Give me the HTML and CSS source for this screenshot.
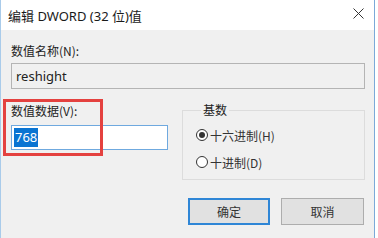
FILE: index.html
```html
<html>
	<head>
		<title> 编辑 DWORD </title>
		<link rel="stylesheet" href="styles.css">
	</head>
	<body>
		<div class="dialog">
			<div class="title-bar">
				<div class="title">编辑 DWORD (32 位)值</div>
				<div class="close-button">
					<svg width="11" height="11" viewBox="0 0 11 11">
						<path d="M0.5 0.5 L10.5 10.5 M10.5 0.5 L0.5 10.5" stroke="#333" stroke-width="1" fill="none"/>
					</svg>
				</div>
			</div>

			<div class="content">
				<div class="field-label">数值名称(N):</div>
				<div class="text-box readonly-box">reshight</div>

				<div class="middle-row">
					<div class="data-column">
						<div class="field-label data-label">数值数据(V):</div>
						<div class="text-box focus-box"><span class="selected-text">768</span></div>
						<div class="red-mark"></div>
					</div>

					<fieldset class="base-group">
						<legend class="base-legend">基数</legend>
						<div class="radio-row">
							<span class="radio radio-checked"></span>
							<span class="radio-label">十六进制(H)</span>
						</div>
						<div class="radio-row">
							<span class="radio"></span>
							<span class="radio-label">十进制(D)</span>
						</div>
					</fieldset>
				</div>

				<div class="button-row">
					<button class="dialog-button default-button">确定</button>
					<button class="dialog-button">取消</button>
				</div>
			</div>
		</div>
	</body>
</html>
```

FILE: styles.css
```css
* {
	margin: 0;
	padding: 0;
	box-sizing: border-box;
}

body {
	width: 378px;
	height: 238px;
	background: #ffffff;
	font-family: "Noto Sans", "Noto Sans CJK SC", sans-serif;
	font-size: 12px;
	color: #000;
	overflow: hidden;
}

.dialog {
	width: 375px;
	height: 238px;
	border-left: 1px solid #a9cbea;
	border-right: 1px solid #7ba9d8;
	background: #f0f0f0;
}

.title-bar {
	height: 30px;
	background: #ffffff;
	display: flex;
	align-items: center;
	justify-content: space-between;
	padding-left: 7px;
	padding-right: 9px;
}

.title {
	font-family: "Noto Sans", "Noto Sans CJK SC", sans-serif;
	font-size: 13px;
	line-height: 16px;
	margin-top: 2px;
	color: #1a1a1a;
}

.close-button {
	width: 14px;
	height: 14px;
	display: flex;
	align-items: center;
	justify-content: center;
	margin-top: -4px;
}

.content {
	padding: 13px 9px 0 10px;
}

.field-label {
	font-family: "Noto Sans CJK SC", sans-serif;
	line-height: 16px;
	height: 16px;
	color: #222;
}

.text-box {
	height: 26px;
	margin-top: 4px;
	border: 1px solid #b4b4b4;
	padding-left: 4px;
	display: flex;
	align-items: center;
	font-size: 13px;
	color: #222;
}

.readonly-box {
	background: #f0f0f0;
}

.middle-row {
	display: flex;
	margin-top: 14px;
	position: relative;
}

.data-column {
	width: 157px;
	margin-right: 14px;
}

.focus-box {
	height: 25px;
	margin-top: 6px;
	background: #ffffff;
	border-color: #6fa9df;
	padding-left: 2px;
}

.selected-text {
	background: #0a74d2;
	color: #ffffff;
	padding: 0 1px;
	line-height: 19px;
}

.red-mark {
	position: absolute;
	left: -8px;
	top: -4px;
	width: 100px;
	height: 57px;
	border: 3px solid #e4413f;
}

.base-group {
	width: 183px;
	height: 77px;
	border: 1px solid #dcdcdc;
	padding: 9px 0 0 13px;
}

.base-legend {
	font-family: "Noto Sans CJK SC", sans-serif;
	line-height: 14px;
	margin-left: 5px;
	padding: 0 2px;
	color: #222;
}

.radio-row {
	height: 18px;
	display: flex;
	align-items: center;
	margin-bottom: 9px;
}

.radio {
	width: 12px;
	height: 12px;
	border: 1px solid #333;
	border-radius: 50%;
	background: #fff;
	position: relative;
	margin-right: 2px;
}

.radio-checked::after {
	content: "";
	position: absolute;
	left: 2px;
	top: 2px;
	width: 6px;
	height: 6px;
	border-radius: 50%;
	background: #333;
}

.radio-label {
	font-family: "Noto Sans CJK SC", sans-serif;
	color: #333;
}

.button-row {
	display: flex;
	justify-content: flex-end;
	gap: 11px;
	margin-top: 18px;
	padding-right: 1px;
}

.dialog-button {
	width: 83px;
	height: 27px;
	background: #e1e1e1;
	border: 1px solid #adadad;
	font-family: "Noto Sans CJK SC", sans-serif;
	font-size: 12px;
	color: #333;
}

.default-button {
	border: 2px solid #2f86d6;
	width: 82px;
}
```
